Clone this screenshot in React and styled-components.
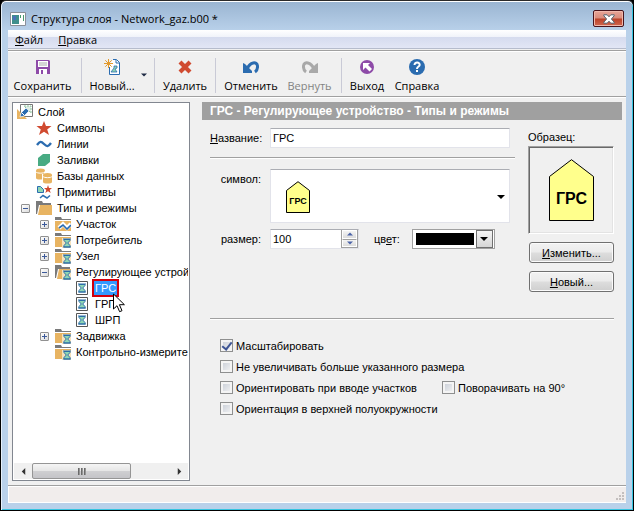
import React from 'react';
import styled, { createGlobalStyle, css } from 'styled-components';

const constants = {
  fontUi: '"Open Sans", "Noto Sans", sans-serif',
  fontDialog: '"Liberation Sans", Arial, sans-serif',
  face: '#f0f0f0',
  glass: '#b9d1ea',
  line: '#a0a0a0',
  blue: '#2b6cb0',
  purple: '#8e4ba8',
  red: '#d04a30',
  sand: '#e8b462',
  folder: '#7a7a7a',
};

const GlobalStyle = createGlobalStyle`
  * { box-sizing: border-box; }
  body {
    margin: 0;
    background: #000;
    font: 11px/16px ${constants.fontDialog};
    color: #000;
  }
  button, input, select { font: inherit; color: inherit; margin: 0; }
  svg { display: block; flex: none; }
`;

const Window = styled.div`
  display: flex;
  flex-direction: column;
  min-height: 100vh;
  padding: 2px 6px 7px;
  border: 1px solid #000;
  border-top-color: #2a2a2a;
  border-radius: 6px 6px 0 0;
  background: linear-gradient(#99b4d1, ${constants.glass} 30px);
  box-shadow: inset 0 1px #fff, inset 1px 0 #e6f0fa, inset -1px -1px #35c4e0;
`;

const TitleBar = styled.header`
  display: flex;
  align-items: center;
  gap: 5px;
  height: 27px;
  padding: 4px 3px 0;
`;

const Title = styled.h1`
  flex: 1;
  margin: 0;
  font: 11px/16px ${constants.fontUi};
`;

const CloseButton = styled.button`
  display: grid;
  place-items: center;
  width: 31px;
  height: 17px;
  padding: 0;
  border: 1px solid #47141c;
  border-radius: 2px;
  background: linear-gradient(#e8a598, #d98c7c 48%, #bb4128 52%, #d0674f);
  box-shadow: inset 0 0 0 1px #f0b8ac;
`;

const Client = styled.div`
  flex: 1;
  display: flex;
  flex-direction: column;
  margin: 0 1px;
  background: ${constants.face};
`;

const MenuBar = styled.nav`
  display: flex;
  gap: 15px;
  height: 19px;
  padding: 0 7px;
  border-bottom: 1px solid #b6bccc;
  background: linear-gradient(#fff, #f0f3fa 7px, #d5dbee 7px, #e2e6f5);
`;

const MenuItem = styled.button`
  padding: 0;
  border: 0;
  background: none;
  font: 11px/20px ${constants.fontUi};
`;

const ToolBar = styled.div`
  display: flex;
  height: 47px;
  margin-top: 1px;
  padding: 6px 0 3px;
  border-top: 1px solid ${constants.line};
  border-bottom: 1px solid ${constants.line};
  box-shadow: inset 0 1px #fff, 0 1px #fff;
`;

const ToolButton = styled.button`
  display: flex;
  flex-direction: column;
  align-items: center;
  gap: 3px;
  width: ${props => props.$width}px;
  padding: 2px 0 0;
  border: 0;
  background: none;
  font: 11px/16px ${constants.fontUi};
  white-space: nowrap;
  &:disabled { color: #838383; }
`;

const DropButton = styled.button`
  display: grid;
  place-items: center;
  width: 12px;
  padding: 0;
  border: 0;
  background: none;
`;

const Separator = styled.span`
  width: 1px;
  margin: 1px 4px 0;
  background: #c9cad6;
`;

const Body = styled.div`
  flex: 1;
  display: flex;
  gap: 12px;
  padding: 5px 4px 4px;
`;

const TreePanel = styled.aside`
  display: flex;
  flex-direction: column;
  flex: none;
  width: 178px;
  padding: 1px;
  border: 1px solid #828790;
  background: #fff;
`;

const TreeScroll = styled.div`
  flex: 1;
  overflow: hidden;
`;

const Branch = styled.ul`
  margin: 0;
  padding: 0 0 0 ${props => (props.$root ? 3 : 19)}px;
  list-style: none;
`;

const TreeRow = styled.div`
  display: flex;
  align-items: center;
  height: 16px;
  white-space: nowrap;
  > svg { margin-right: 5px; }
`;

const Expander = styled.button`
  flex: none;
  display: grid;
  place-items: center;
  width: 9px;
  height: 9px;
  margin: 0 6px 0 -15px;
  padding: 0;
  border: 1px solid #919191;
  border-radius: 1px;
  background: linear-gradient(135deg, #fff, #dcdcdc);
`;

const TreeLabel = styled.span`
  position: relative;
  line-height: 14px;
  ${props => props.$selected && css`
    margin-left: -1px;
    padding: 0 1px;
    background: #3399ff;
    color: #fff;
    outline: 2px solid #d4000c;
  `}
`;

const Cursor = styled.svg`
  position: absolute;
  left: 19px;
  top: 12px;
  z-index: 1;
`;

const ScrollBar = styled.div`
  display: flex;
  height: 16px;
  background: #f0f0f0;
`;

const ScrollArrow = styled.button`
  display: grid;
  place-items: center;
  width: 18px;
  padding: 0;
  border: 0;
  background: none;
`;

const ScrollTrack = styled.div`
  flex: 1;
  display: flex;
`;

const ScrollThumb = styled.div`
  display: flex;
  justify-content: center;
  align-items: center;
  gap: 1px;
  width: 72%;
  border: 1px solid #959595;
  border-radius: 2px;
  background: linear-gradient(#f5f5f5, #e6e6e6 48%, #cfcfd1 52%, #c4c4c8);
  i {
    width: 2px;
    height: 7px;
    background: linear-gradient(90deg, #555, #aaa);
  }
`;

const Main = styled.main`
  flex: 1;
  min-width: 0;
`;

const Heading = styled.h2`
  height: 18px;
  margin: 0;
  padding: 0 8px;
  background: ${constants.line};
  color: #fff;
  font: bold 12px/18px ${constants.fontDialog};
  white-space: nowrap;
`;

const Content = styled.div`
  padding: 8px 8px 0;
`;

const Columns = styled.div`
  display: flex;
  align-items: flex-start;
  gap: 13px;
`;

const Fields = styled.div`
  flex: 1;
`;

const Rule = styled.hr`
  height: 2px;
  margin: ${props => (props.$gap || 0)}px 0 0;
  border: 0;
  border-top: 1px solid ${constants.line};
  border-bottom: 1px solid #fff;
`;

const FieldRow = styled.div`
  display: grid;
  grid-template-columns: 51px 1fr;
  column-gap: 9px;
  align-items: ${props => (props.$top ? 'start' : 'center')};
  padding-right: 5px;
`;

const Label = styled.label`
  line-height: 20px;
  text-align: ${props => (props.$right ? 'right' : 'left')};
  white-space: nowrap;
`;

const fieldFrame = css`
  border: 1px solid #e2e3ea;
  border-top-color: #abadb3;
  border-radius: 1px;
  background: #fff;
`;

const TextInput = styled.input`
  width: 100%;
  height: 20px;
  padding: 0 2px;
  outline: 0;
  ${fieldFrame}
`;

const NameRow = styled(FieldRow)`
  margin-bottom: 9px;
`;

const SymbolRow = styled(FieldRow)`
  margin: 10px 0 6px;
`;

const SymbolBox = styled.div`
  position: relative;
  height: 54px;
  select {
    width: 100%;
    height: 100%;
    appearance: none;
    outline: 0;
    ${fieldFrame}
  }
  svg {
    position: absolute;
    pointer-events: none;
  }
  .symbol { left: 16px; top: 12px; }
  .arrow { right: 5px; top: 24px; }
`;

const SizeLine = styled.div`
  display: flex;
  align-items: center;
`;

const Spinner = styled.div`
  display: flex;
  width: 89px;
  height: 20px;
  margin-right: 15px;
  ${fieldFrame}
  input {
    flex: 1;
    min-width: 0;
    padding: 0 2px;
    border: 0;
    background: none;
    outline: 0;
  }
`;

const SpinButtons = styled.div`
  display: grid;
  grid-template-rows: 1fr 1fr;
  width: 17px;
  border: 1px solid ${constants.line};
  border-top: 0;
  button {
    display: grid;
    place-items: center;
    padding: 0;
    border: 1px solid #fff;
    background: linear-gradient(#f4f4f4, #dcdcdc);
  }
  button + button { border-top: 1px solid ${constants.line}; }
`;

const ColorBox = styled.div`
  position: relative;
  width: 83px;
  height: 20px;
  margin-left: 12px;
  select {
    display: block;
    width: 100%;
    height: 100%;
    appearance: none;
    outline: 0;
    border: 1px solid ${constants.line};
    border-radius: 0;
    background: #fff;
  }
`;

const Swatch = styled.span`
  position: absolute;
  inset: 4px 21px 4px 4px;
  background: #000;
  pointer-events: none;
`;

const ColorArrow = styled.span`
  position: absolute;
  inset: 1px 2px 1px auto;
  display: grid;
  place-items: center;
  width: 17px;
  border: 1px solid #707070;
  background: linear-gradient(#f4f4f4, #d6d6d6);
  pointer-events: none;
`;

const Sample = styled.div`
  display: flex;
  flex-direction: column;
  width: 86px;
`;

const SampleTitle = styled.div`
  line-height: 18px;
`;

const Preview = styled.div`
  display: grid;
  place-items: center;
  height: 88px;
  border: 1px solid;
  border-color: ${constants.line} #fff #fff ${constants.line};
  box-shadow: inset 1px 1px #696969, inset -1px -1px #e3e3e3;
`;

const PushButton = styled.button`
  height: 21px;
  margin: 8px 0 0 1px;
  padding: 0;
  border: 1px solid #707070;
  border-radius: 3px;
  background: linear-gradient(#f2f2f2, #ebebeb 48%, #dddddd 52%, #cfcfcf);
  box-shadow: inset 0 0 0 1px #fbfbfb;
`;

const Options = styled.div`
  display: grid;
  grid-template-columns: 222px 1fr;
  grid-auto-rows: 21px;
  margin-top: 15px;
  padding-left: 10px;
`;

const Check = styled.label`
  display: flex;
  align-items: center;
  gap: 3px;
  grid-column: ${props => (props.$second ? 2 : 1)};
  white-space: nowrap;
  input {
    flex: none;
    display: grid;
    place-items: center;
    width: 13px;
    height: 13px;
    appearance: none;
    border: 1px solid #8e8f8f;
    background: linear-gradient(135deg, #c4cad4, #f6f6f6);
    box-shadow: inset 0 0 0 2px #f4f4f4;
  }
  input:checked::after {
    content: '';
    width: 4px;
    height: 8px;
    margin-bottom: 2px;
    border: solid #3d5494;
    border-width: 0 2px 2px 0;
    transform: rotate(38deg);
  }
`;

const StatusBar = styled.footer`
  display: flex;
  justify-content: flex-end;
  align-items: flex-end;
  height: 18px;
  padding: 2px;
  border-top: 1px solid ${constants.line};
  border-bottom: 1px solid #fff;
  background: #f1edec;
  box-shadow: inset 1px 1px #fff;
`;

const Arrow = ({ size = 7, color = '#000', dir = 'down', ...rest }) => {
  const angle = { down: 0, left: 90, up: 180, right: 270 }[dir];
  return (
    <svg width={size} height={size} viewBox="0 0 8 8" {...rest}>
      <path d="M0 2h8L4 6z" fill={color} transform={`rotate(${angle} 4 4)`} />
    </svg>
  );
};

const Icon = ({ children, size = 16 }) => (
  <svg width={size} height={size} viewBox="0 0 16 16" fill="none">{children}</svg>
);

const Hourglass = ({ x = 0, y = 0 }) => (
  <g transform={`translate(${x} ${y})`}>
    <path d="M1 1h6v1L4.700 4.500 7 7v1.500H1V7l2.300-2.500L1 2z" fill="#8fd6b4" stroke="#2d6ea8" />
    <path d="M0 .500h8M0 8.500h8" stroke="#2d6ea8" />
  </g>
);

const FolderShape = ({ open }) => (
  open ? (
    <g>
      <path d="M0 1h6l1 2h8v2H3L1 14H0z" fill={constants.folder} />
      <path d="M4 5h12v10H2z" fill={constants.sand} />
    </g>
  ) : (
    <g>
      <path d="M0 1h6l1 2h9v1H0z" fill={constants.folder} />
      <path d="M0 5h16v10H0z" fill={constants.sand} />
    </g>
  )
);

const icons = {
  layer: (
    <Icon>
      <path d="M3.500.500h12v12h-12z" fill="#fff" stroke="#777" />
      <path d="M7 2h7v7z" fill="#dfeee4" stroke="#8ec4a0" strokeDasharray="2 1" />
      <path d="M0 5l10 10H0z" fill={constants.sand} />
      <path d="M3 13l1-4 5-5 3 3-5 5z" fill={constants.blue} stroke="#fff" strokeWidth=".7" />
      <path d="M5 9l2 2" stroke="#fff" />
    </Icon>
  ),
  star: (
    <Icon><path d="M8 1l2 5h5.500l-4.300 3.500L13 15l-5-3.300L3 15l1.800-5.500L.500 6H6z" fill={constants.red} /></Icon>
  ),
  wave: (
    <Icon><path d="M1 9c3-4 4-4 7-1s4 3 7-1" stroke={constants.blue} strokeWidth="2.400" /></Icon>
  ),
  fill: (
    <Icon><path d="M2 6l5-4h7v8l-5 4H2z" fill="#48ab83" /></Icon>
  ),
  database: (
    <Icon>
      <path d="M0 3v7c0 2 8 2 8 0V3z" fill={constants.sand} />
      <ellipse cx="4.500" cy="2.500" rx="4.500" ry="2" fill={constants.sand} />
      <path d="M0 4c1 1.500 8 1.500 9 0" stroke="#fff" />
      <path d="M6 6h10v9H6z" fill="#fff" />
      <path d="M7 7v7c0 2 9 2 9 0V7z" fill={constants.sand} />
      <ellipse cx="11.500" cy="7" rx="4.500" ry="2" fill={constants.sand} />
      <path d="M7 8.500c1 1.500 8 1.500 9 0" stroke="#fff" />
    </Icon>
  ),
  primitives: (
    <Icon>
      <path d="M1.500 2.500h3l3 3v3h-6z" fill="#8fd6b4" stroke={constants.blue} />
      <path d="M12 1l1 3h3l-2.300 2 1 3L12 7.200 9.300 9l1-3L8 4h3z" fill={constants.red} />
      <path d="M4 14l3-2.500 4 2.500 3-2.500" stroke={constants.blue} strokeWidth="1.500" />
    </Icon>
  ),
  folderOpen: <Icon><FolderShape open /></Icon>,
  folderWave: (
    <Icon>
      <FolderShape />
      <path d="M4 12l4-4 4 4 4-4" stroke="#fff" strokeWidth="4" />
      <path d="M4 12l4-3 4 4 4-4" stroke={constants.blue} strokeWidth="1.700" />
    </Icon>
  ),
  folderGlass: (
    <Icon>
      <FolderShape />
      <path d="M7 6h9v10H7z" fill="#f6e2bd" />
      <Hourglass x={8} y={6.5} />
    </Icon>
  ),
  folderOpenGlass: (
    <Icon>
      <FolderShape open />
      <path d="M7 6h9v10H7z" fill="#f6e2bd" />
      <Hourglass x={8} y={6.5} />
    </Icon>
  ),
  sheet: (
    <Icon>
      <path d="M2.500 1.500h11v13h-11z" fill="#fff" stroke="#555" />
      <Hourglass x={4} y={3.5} />
    </Icon>
  ),
  save: (
    <Icon>
      <path d="M1 1h13l1 1v13H1z" fill={constants.purple} />
      <path d="M3 2h10v6H3z" fill="#fff" />
      <path d="M4 4h8M4 6h8" stroke="#aaa" />
      <path d="M4 10h8v5H4z" fill="#fff" />
      <path d="M6 11h2v4H6z" fill={constants.purple} />
    </Icon>
  ),
  create: (
    <Icon>
      <path d="M5.500 8v7.500h10v-12l-3-3H9" fill="#fff" stroke={constants.blue} />
      <path d="M12 1v3h3" stroke={constants.blue} />
      <path d="M7 13l3-4V7h3v2l-2 1 2 3z" fill="#8fd6b4" stroke={constants.blue} strokeWidth=".8" />
      <path d="M4.500 0v9M0 4.500h9M1.300 1.300l6.400 6.400M7.700 1.300L1.300 7.700" stroke="#e39a2c" />
    </Icon>
  ),
  remove: (
    <Icon><path d="M3 3l10 10M13 3L3 13" stroke={constants.red} strokeWidth="4.200" /></Icon>
  ),
  undo: (
    <Icon>
      <path d="M4 10C7 3 14 2 14.500 7c.2 3-1 5-2.500 6" stroke={constants.blue} strokeWidth="3" />
      <path d="M0 4l2 1 2 2 5 5v2H0z" fill={constants.blue} />
    </Icon>
  ),
  redo: (
    <Icon>
      <path d="M12 10C9 3 2 2 1.500 7c-.2 3 1 5 2.500 6" stroke="#a9a9a9" strokeWidth="3" />
      <path d="M16 4l-2 1-2 2-5 5v2h9z" fill="#a9a9a9" />
    </Icon>
  ),
  exit: (
    <Icon>
      <circle cx="8" cy="8" r="7" fill={constants.purple} />
      <path d="M4 4h7L9 6l4 4-2.500 2.500-4-4L4 11z" fill="#fff" />
    </Icon>
  ),
  help: (
    <Icon>
      <circle cx="8" cy="8" r="8" fill={constants.blue} />
      <path d="M5.500 6c0-3.500 5.500-3 5.200 0C10.500 7.700 8 7.500 8 10" stroke="#fff" strokeWidth="2" />
      <path d="M7 11h2v2H7z" fill="#fff" />
    </Icon>
  ),
};

const GrsSymbol = ({ width, height, fontSize, ...rest }) => {
  const roof = Math.round(height * 0.27);
  return (
    <svg width={width} height={height} {...rest}>
      <path
        d={`M.5 ${roof + 0.5}L${width / 2} .7L${width - 0.5} ${roof + 0.5}V${height - 0.5}H.5z`}
        fill="#ffff8c"
        stroke="#000"
      />
      <text
        x={width / 2}
        y={Math.round(height * 0.72)}
        textAnchor="middle"
        fontFamily="Liberation Sans"
        fontWeight="bold"
        fontSize={fontSize}
      >
        ГРС
      </text>
    </svg>
  );
};

const tree = [
  {
    label: 'Слой',
    icon: 'layer',
    children: [
      { label: 'Символы', icon: 'star' },
      { label: 'Линии', icon: 'wave' },
      { label: 'Заливки', icon: 'fill' },
      { label: 'Базы данных', icon: 'database' },
      { label: 'Примитивы', icon: 'primitives' },
      {
        label: 'Типы и режимы',
        icon: 'folderOpen',
        expander: 'minus',
        children: [
          { label: 'Участок', icon: 'folderWave', expander: 'plus' },
          { label: 'Потребитель', icon: 'folderGlass', expander: 'plus' },
          { label: 'Узел', icon: 'folderGlass', expander: 'plus' },
          {
            label: 'Регулирующее устрой',
            icon: 'folderOpenGlass',
            expander: 'minus',
            children: [
              { label: 'ГРС', icon: 'sheet', selected: true },
              { label: 'ГРП', icon: 'sheet' },
              { label: 'ШРП', icon: 'sheet' },
            ],
          },
          { label: 'Задвижка', icon: 'folderGlass', expander: 'plus' },
          { label: 'Контрольно-измерите', icon: 'folderGlass' },
        ],
      },
    ],
  },
];

const TreeNode = ({ node }) => (
  <li>
    <TreeRow>
      {node.expander && (
        <Expander aria-label={node.label} aria-expanded={node.expander === 'minus'}>
          <svg width="5" height="5">
            <path d={node.expander === 'plus' ? 'M0 2h5v1H0zM2 0h1v5H2z' : 'M0 2h5v1H0z'} fill="#3c5a9a" />
          </svg>
        </Expander>
      )}
      {icons[node.icon]}
      <TreeLabel $selected={node.selected}>
        {node.label}
        {node.selected && (
          <Cursor width="13" height="20">
            <path d="M.5 1v15l3.500-3.300 2.600 6 2.400-1-2.600-6h5z" fill="#fff" stroke="#000" />
          </Cursor>
        )}
      </TreeLabel>
    </TreeRow>
    {node.children && (
      <Branch>
        {node.children.map(child => <TreeNode key={child.label} node={child} />)}
      </Branch>
    )}
  </li>
);

const App = () => (
  <>
    <GlobalStyle />
    <Window>
      <TitleBar>
        <svg width="16" height="14">
          <path d="M.5 .5h15v13H.5z" fill="#fff" stroke="#8a8f98" />
          <path d="M2 3h7v9H2z" fill="#3f8f8c" />
          <path d="M3 4h3v4H3z" fill="#4a72b8" />
          <path d="M10 3h1v3h-1zM13 3h1v6h-1z" fill="#4a9a70" />
        </svg>
        <Title>Структура слоя - Network_gaz.b00 *</Title>
        <CloseButton aria-label="Закрыть">
          <svg width="12" height="10" viewBox="0 0 12 10">
            <path
              d="M.8 .8h3.400L6 2.800 7.800.8h3.400v1L8.400 5l2.800 3.200v1H7.800L6 7.200l-1.800 2H.8v-1L3.600 5 .8 1.800z"
              fill="#fff"
              stroke="#54626e"
            />
          </svg>
        </CloseButton>
      </TitleBar>
      <Client>
        <MenuBar>
          <MenuItem><u>Ф</u>айл</MenuItem>
          <MenuItem><u>П</u>равка</MenuItem>
        </MenuBar>
        <ToolBar>
          <ToolButton $width={69}>{icons.save}Сохранить</ToolButton>
          <Separator />
          <ToolButton $width={52}>{icons.create}Новый...</ToolButton>
          <DropButton aria-label="Новый"><Arrow color="#1e2a44" size={6} /></DropButton>
          <Separator />
          <ToolButton $width={52}>{icons.remove}Удалить</ToolButton>
          <Separator />
          <ToolButton $width={62}>{icons.undo}Отменить</ToolButton>
          <ToolButton $width={55} disabled>{icons.redo}Вернуть</ToolButton>
          <Separator />
          <ToolButton $width={42}>{icons.exit}Выход</ToolButton>
          <ToolButton $width={58}>{icons.help}Справка</ToolButton>
        </ToolBar>
        <Body>
          <TreePanel>
            <TreeScroll>
              <Branch $root>
                {tree.map(node => <TreeNode key={node.label} node={node} />)}
              </Branch>
            </TreeScroll>
            <ScrollBar>
              <ScrollArrow aria-label="Влево"><Arrow dir="left" color="#333" /></ScrollArrow>
              <ScrollTrack><ScrollThumb><i /><i /><i /></ScrollThumb></ScrollTrack>
              <ScrollArrow aria-label="Вправо"><Arrow dir="right" color="#333" /></ScrollArrow>
            </ScrollBar>
          </TreePanel>
          <Main>
            <Heading>ГРС - Регулирующее устройство - Типы и режимы</Heading>
            <Content>
              <Columns>
                <Fields>
                  <NameRow>
                    <Label htmlFor="name"><u>Н</u>азвание:</Label>
                    <TextInput id="name" defaultValue="ГРС" />
                  </NameRow>
                  <Rule />
                  <SymbolRow $top>
                    <Label htmlFor="symbol" $right>символ:</Label>
                    <SymbolBox>
                      <select id="symbol"><option value="grs" /></select>
                      <GrsSymbol className="symbol" width={24} height={32} fontSize={9} />
                      <Arrow className="arrow" size={8} />
                    </SymbolBox>
                  </SymbolRow>
                  <FieldRow>
                    <Label htmlFor="size" $right>размер:</Label>
                    <SizeLine>
                      <Spinner>
                        <input id="size" defaultValue="100" />
                        <SpinButtons>
                          <button aria-label="Больше"><Arrow dir="up" color="#4a62a8" size={6} /></button>
                          <button aria-label="Меньше"><Arrow color="#4a62a8" size={6} /></button>
                        </SpinButtons>
                      </Spinner>
                      <Label htmlFor="color">цв<u>е</u>т:</Label>
                      <ColorBox>
                        <select id="color"><option value="#000000" /></select>
                        <Swatch />
                        <ColorArrow><Arrow size={8} /></ColorArrow>
                      </ColorBox>
                    </SizeLine>
                  </FieldRow>
                </Fields>
                <Sample>
                  <SampleTitle>Образец:</SampleTitle>
                  <Preview>
                    <GrsSymbol width={45} height={62} fontSize={16} />
                  </Preview>
                  <PushButton><u>И</u>зменить...</PushButton>
                  <PushButton><u>Н</u>овый...</PushButton>
                </Sample>
              </Columns>
              <Rule $gap={26} />
              <Options>
                <Check><input type="checkbox" defaultChecked />Масштабировать</Check>
                <Check><input type="checkbox" />Не увеличивать больше указанного размера</Check>
                <Check><input type="checkbox" />Ориентировать при вводе участков</Check>
                <Check $second><input type="checkbox" />Поворачивать на 90°</Check>
                <Check><input type="checkbox" />Ориентация в верхней полуокружности</Check>
              </Options>
            </Content>
          </Main>
        </Body>
        <StatusBar>
          <svg width="8" height="8">
            <path d="M6 0h2v2H6zM3 3h2v2H3zM6 3h2v2H6zM0 6h2v2H0zM3 6h2v2H3zM6 6h2v2H6z" fill="#c4bfbe" />
          </svg>
        </StatusBar>
      </Client>
    </Window>
  </>
);

export default App;
